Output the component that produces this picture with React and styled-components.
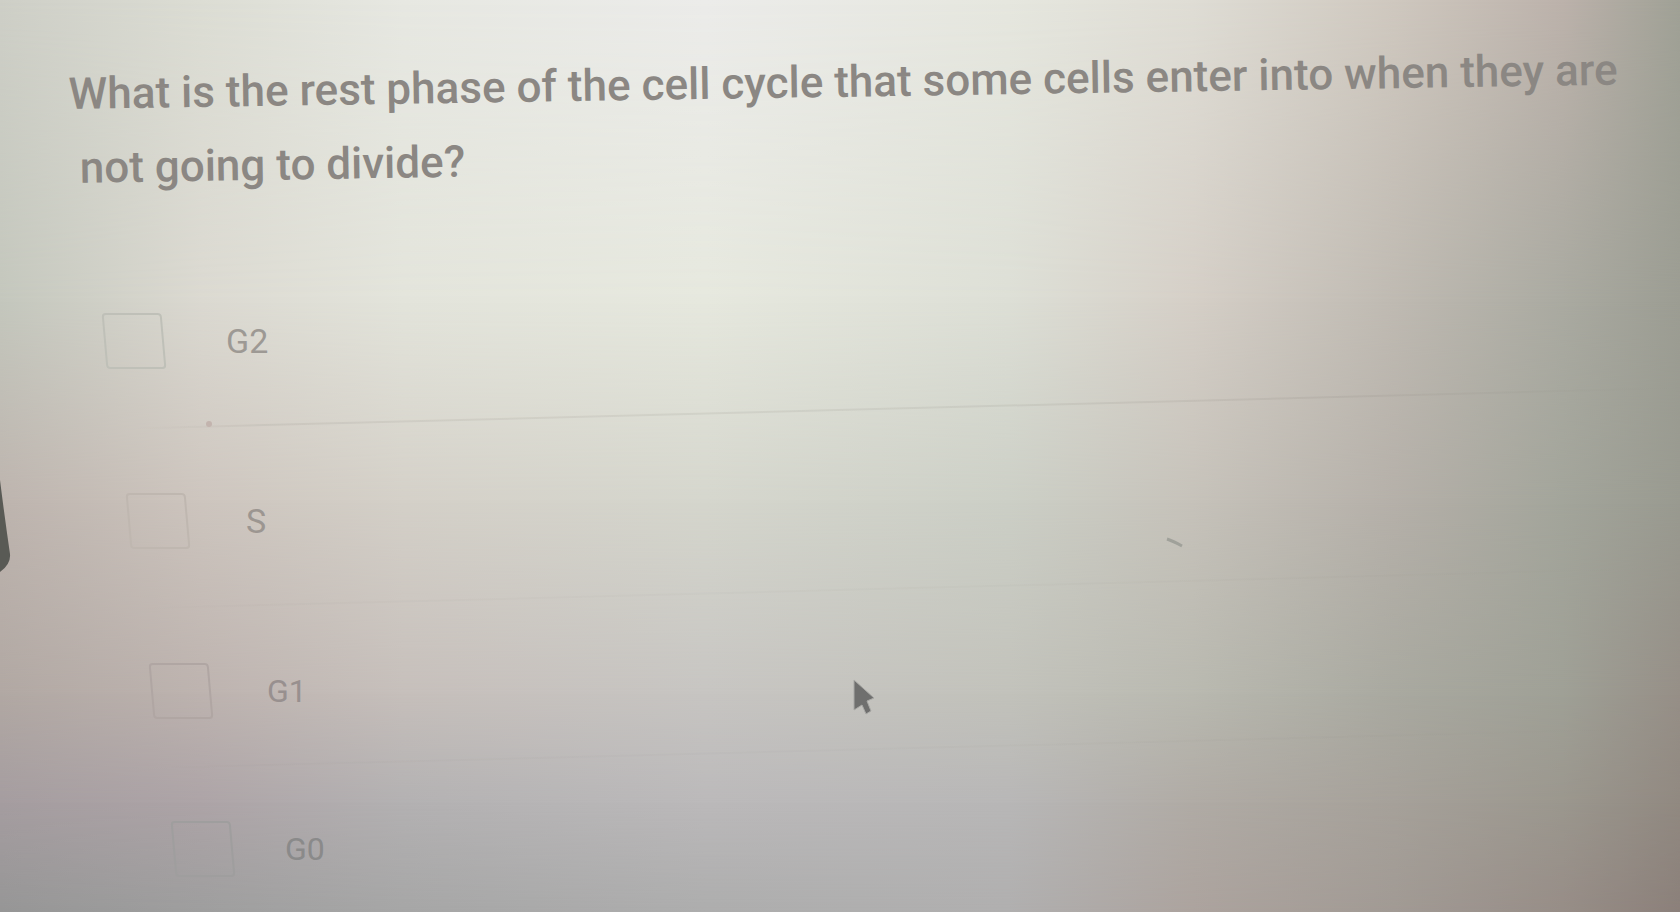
import React, { useState } from 'react';
import styled, { createGlobalStyle } from 'styled-components';

const GlobalStyle = createGlobalStyle`
  * {
    box-sizing: border-box;
  }

  body {
    margin: 0;
    background: #b4b3b0;
    font-family: Roboto, "Liberation Sans", sans-serif;
  }
`;

// Each shade fades in between `from` and `to`, and stays solid below that.
const shades = [
  {
    from: -1,
    to: 0,
    colors: ['#cecfc7', '#dcddd4', '#e7e8e2', '#ececea', '#e6e7df', '#dfddd5', '#cfc8bf', '#bcb2ab', '#a0a196'],
  },
  {
    from: 0,
    to: 33,
    colors: ['#c4c7bd', '#dbd9d1', '#e3e4db', '#e6e8de', '#dddfd6', '#d5cfc7', '#bfbab2', '#aaaaa1', '#9c9d93'],
  },
  {
    from: 33,
    to: 55,
    colors: ['#bdb4ae', '#cdc5be', '#d4d0c8', '#d5d6cd', '#cccfc6', '#c6c2ba', '#b5b0a9', '#a3a59b', '#999a90'],
  },
  {
    from: 55,
    to: 76,
    colors: ['#b1a8a3', '#bdb3af', '#c6bfbb', '#c7c5c2', '#c2c2bb', '#b9b9b0', '#a9a9a0', '#9fa096', '#968f87'],
  },
  {
    from: 76,
    to: 88,
    colors: ['#a59da0', '#ada4a7', '#b3b1b2', '#bbb9ba', '#b8b7b7', '#b0aba5', '#a6a19a', '#9b978e', '#918981'],
  },
  {
    from: 88,
    to: 100,
    colors: ['#969696', '#9e9e9e', '#a6a6a6', '#adadad', '#b0afaf', '#aca39e', '#a19a94', '#978d87', '#8b807a'],
  },
];

const stops = [0, 12, 24, 42, 60, 71, 83, 93, 100];

const options = [
  { id: 'g2', label: 'G2', indent: 104, pad: 62, gap: 62, size: 34, ink: '#9d9994', edge: '#bfc0b8' },
  { id: 's', label: 'S', indent: 128, pad: 62, gap: 58, size: 34, ink: '#9c9691', edge: '#bfb7b0' },
  { id: 'g1', label: 'G1', indent: 151, pad: 52, gap: 56, size: 32, ink: '#98908f', edge: '#b0a6a3' },
  { id: 'g0', label: 'G0', indent: 173, pad: 50, gap: 52, size: 32, ink: '#8a8a8a', edge: '#9f9e9e' },
];

const Page = styled.main`
  position: relative;
  isolation: isolate;
  min-height: 100vh;
  padding-top: 58px;
  overflow: hidden;
`;

const Shade = styled.div`
  position: absolute;
  inset: 0;
  z-index: -1;
  background: linear-gradient(
    to right,
    ${({ $colors }) => $colors.map((color, i) => `${color} ${stops[i]}%`).join(', ')}
  );
  mask-image: linear-gradient(
    to bottom,
    transparent ${({ $from }) => $from}%,
    #000 ${({ $to }) => $to}%
  );
`;

const Question = styled.h1`
  margin: 0 0 45px;
  padding-left: 68px;
  font-size: 44px;
  font-weight: 500;
  line-height: 74px;
  color: #8b8783;
  transform: rotate(-0.9deg);
  transform-origin: left top;
`;

const Line = styled.span`
  display: block;
  padding-left: ${({ $indent }) => $indent || 0}px;
  white-space: nowrap;
`;

const Options = styled.ul`
  display: flex;
  flex-direction: column;
  margin: 0;
  padding: 0;
  list-style: none;
`;

const Option = styled.li`
  display: flex;
  flex-direction: column;
`;

const Choice = styled.label`
  display: flex;
  align-items: center;
  align-self: flex-start;
  gap: ${({ $gap }) => $gap}px;
  padding: ${({ $pad }) => $pad}px 0 ${({ $pad }) => $pad}px ${({ $indent }) => $indent}px;
  font-size: ${({ $size }) => $size}px;
  line-height: 56px;
  color: ${({ $ink }) => $ink};
  cursor: pointer;

  ${Option}:last-child & {
    padding-bottom: 0;
  }
`;

const Checkbox = styled.input`
  appearance: none;
  width: 60px;
  height: 56px;
  margin: 0;
  border: 2px solid ${({ $edge }) => $edge};
  border-radius: 4px;
  transform: skewX(5deg);
  cursor: pointer;

  &:checked {
    background: ${({ $edge }) => $edge};
  }
`;

const Divider = styled.hr`
  width: 100%;
  height: 2px;
  margin: 0 0 -2px;
  border: 0;
  background: linear-gradient(
    to right,
    transparent 8%,
    rgba(110, 104, 96, ${({ $strength }) => $strength}) 16%,
    rgba(110, 104, 96, ${({ $strength }) => $strength}) 80%,
    transparent
  );
  transform: rotate(-1.5deg);
  transform-origin: left top;
`;

const Drawing = styled.svg`
  position: absolute;
  left: ${({ $left }) => $left};
  top: ${({ $top }) => $top};
  pointer-events: none;
`;

function App() {
  const [checked, setChecked] = useState({});

  const toggle = (id) => setChecked((prev) => ({ ...prev, [id]: !prev[id] }));

  return (
    <>
      <GlobalStyle />
      <Page>
        {shades.map(({ from, to, colors }) => (
          <Shade key={to} $from={from} $to={to} $colors={colors} />
        ))}
        <Question>
          <Line>
            What is the rest phase of the cell cycle that some cells enter into when they are
          </Line>
          <Line $indent={10}>not going to divide?</Line>
        </Question>
        <Options>
          {options.map(({ id, label, indent, pad, gap, size, ink, edge }, i) => (
            <Option key={id}>
              <Choice htmlFor={id} $indent={indent} $pad={pad} $gap={gap} $size={size} $ink={ink}>
                <Checkbox
                  id={id}
                  type="checkbox"
                  checked={Boolean(checked[id])}
                  onChange={() => toggle(id)}
                  $edge={edge}
                />
                {label}
              </Choice>
              {i < options.length - 1 && <Divider $strength={i === 0 ? 0.1 : 0.03} />}
            </Option>
          ))}
        </Options>

        {/* Pointer */}
        <Drawing $left="50.8%" $top="74.5%" width="24" height="38" viewBox="0 0 24 38" aria-hidden="true">
          <path
            d="M1 1 L21 19 L14 22 L18 32 L13 35 L9 26 L1 31 Z"
            fill="#6f6f6e"
            stroke="#a9a9a6"
            strokeWidth="1"
            strokeLinejoin="round"
          />
        </Drawing>
        {/* Dark edge on the left */}
        <Drawing $left="0" $top="52.4%" width="14" height="96" viewBox="0 0 14 96" aria-hidden="true">
          <path d="M0 2 Q5 42 10 76 Q11 86 0 94 Z" fill="#595a55" />
        </Drawing>
        {/* Specks */}
        <Drawing $left="69%" $top="58.8%" width="30" height="14" viewBox="0 0 30 14" aria-hidden="true">
          <path d="M8 3 Q14 5 23 10" fill="none" stroke="#a0a19a" strokeWidth="3" />
        </Drawing>
        <Drawing $left="12%" $top="46%" width="12" height="10" viewBox="0 0 12 10" aria-hidden="true">
          <circle cx="7" cy="4" r="3" fill="#c3b4ae" />
        </Drawing>
      </Page>
    </>
  );
}

export default App;
